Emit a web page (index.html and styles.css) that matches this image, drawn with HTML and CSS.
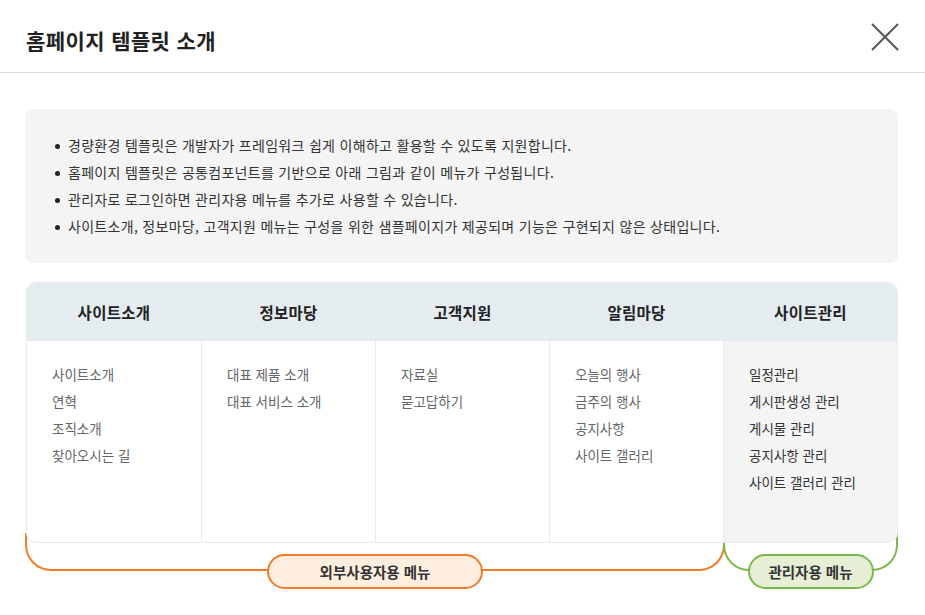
FILE: index.html
```html
<!DOCTYPE html>
<html lang="ko">
<head>
    <meta charset="UTF-8">
    <meta name="viewport" content="width=device-width, initial-scale=1.0">
    <title>홈페이지 템플릿 소개</title>
    <link rel="stylesheet" href="styles.css">
</head>
<body>

    <!-- 팝업 헤더 -->
    <div class="popup-head">
        <h1>홈페이지 템플릿 소개</h1>
        <button type="button" class="btn-close" aria-label="닫기">
            <svg width="30" height="30" viewBox="0 0 30 30">
                <path d="M2 2 L28 28 M28 2 L2 28" stroke="#555" stroke-width="2" fill="none"/>
            </svg>
        </button>
    </div>

    <div class="popup-body">
        <!-- 안내 문구 -->
        <ul class="info-box">
            <li>경량환경 템플릿은 개발자가 프레임워크 쉽게 이해하고 활용할 수 있도록 지원합니다.</li>
            <li>홈페이지 템플릿은 공통컴포넌트를 기반으로 아래 그림과 같이 메뉴가 구성됩니다.</li>
            <li>관리자로 로그인하면 관리자용 메뉴를 추가로 사용할 수 있습니다.</li>
            <li>사이트소개, 정보마당, 고객지원 메뉴는 구성을 위한 샘플페이지가 제공되며 기능은 구현되지 않은 상태입니다.</li>
        </ul>

        <!-- 메뉴 구성도 -->
        <div class="menu-map">
            <div class="menu-col">
                <div class="menu-title">사이트소개</div>
                <ul class="menu-list">
                    <li>사이트소개</li>
                    <li>연혁</li>
                    <li>조직소개</li>
                    <li>찾아오시는 길</li>
                </ul>
            </div>
            <div class="menu-col">
                <div class="menu-title">정보마당</div>
                <ul class="menu-list">
                    <li>대표 제품 소개</li>
                    <li>대표 서비스 소개</li>
                </ul>
            </div>
            <div class="menu-col">
                <div class="menu-title">고객지원</div>
                <ul class="menu-list">
                    <li>자료실</li>
                    <li>묻고답하기</li>
                </ul>
            </div>
            <div class="menu-col">
                <div class="menu-title">알림마당</div>
                <ul class="menu-list">
                    <li>오늘의 행사</li>
                    <li>금주의 행사</li>
                    <li>공지사항</li>
                    <li>사이트 갤러리</li>
                </ul>
            </div>
            <div class="menu-col admin">
                <div class="menu-title">사이트관리</div>
                <ul class="menu-list">
                    <li>일정관리</li>
                    <li>게시판생성 관리</li>
                    <li>게시물 관리</li>
                    <li>공지사항 관리</li>
                    <li>사이트 갤러리 관리</li>
                </ul>
            </div>
        </div>

        <!-- 사용자 구분 괄호 -->
        <div class="bracket-row">
            <div class="bracket user">
                <span class="bracket-label">외부사용자용 메뉴</span>
            </div>
            <div class="bracket manager">
                <span class="bracket-label">관리자용 메뉴</span>
            </div>
        </div>
    </div>

</body>
</html>
```

FILE: styles.css
```css
body {
    margin: 0;
    font-family: "Noto Sans CJK KR", "Noto Sans", sans-serif;
    color: #333;
    background-color: #fff;
}
ul {
    margin: 0;
    padding: 0;
}

/* header */
.popup-head {
    display: flex;
    align-items: center;
    justify-content: space-between;
    box-sizing: border-box;
    height: 73px;
    padding: 8px 25px 0 26px;
    border-bottom: 1px solid #dcdcdc;
}
.popup-head h1 {
    margin: 0;
    font-size: 21px;
    font-weight: 700;
    color: #222;
    letter-spacing: 0.4px;
}
.btn-close {
    display: flex;
    margin-top: -6px;
    padding: 0;
    border: none;
    background: none;
    cursor: pointer;
}

.popup-body {
    padding: 36px 27px 40px 25px;
}

/* info box */
.info-box {
    list-style: none;
    background-color: #f4f4f4;
    border-radius: 8px;
    padding: 23px 20px 23px 30px;
}
.info-box li {
    position: relative;
    padding-left: 13px;
    font-size: 14px;
    line-height: 27px;
    color: #333;
    letter-spacing: 0.3px;
}
.info-box li::before {
    content: "";
    position: absolute;
    left: 0;
    top: 12px;
    width: 5px;
    height: 5px;
    border-radius: 50%;
    background-color: #222;
}

/* menu map */
.menu-map {
    position: relative;
    z-index: 1;
    display: grid;
    grid-template-columns: repeat(5, 1fr);
    margin: 19px 0 0 1px;
    border: 1px solid #e6eaed;
    border-radius: 10px;
    overflow: hidden;
    background-color: #fff;
}
.menu-col {
    display: flex;
    flex-direction: column;
    border-left: 1px solid #e6eaed;
}
.menu-col:first-child {
    border-left: none;
}
.menu-title {
    height: 58px;
    display: flex;
    align-items: center;
    justify-content: center;
    background-color: #e5ecf0;
    font-size: 15.5px;
    font-weight: 700;
    color: #222;
    letter-spacing: 0.3px;
}
.menu-list {
    list-style: none;
    box-sizing: border-box;
    height: 201px;
    padding: 20px 25px 0;
}
.menu-list li {
    font-size: 13.5px;
    line-height: 27px;
    color: #666;
}
.admin .menu-list {
    background-color: #f4f4f4;
}
.admin .menu-list li {
    color: #333;
}

/* brackets under the menu map */
.bracket-row {
    position: relative;
    display: flex;
    margin-top: -10px;
    padding-bottom: 20px;
}
.bracket {
    position: relative;
    height: 36px;
    border: 2px solid;
    border-top: none;
    border-radius: 0 0 26px 26px;
}
.bracket.user {
    width: 696px;
    border-color: #f37b28;
}
.bracket.manager {
    flex: 1;
    margin-left: -2px;
    border-color: #7bb84e;
}
.bracket-label {
    position: absolute;
    left: 50%;
    bottom: -20px;
    z-index: 2;
    transform: translateX(-50%);
    box-sizing: border-box;
    height: 35px;
    display: flex;
    align-items: center;
    justify-content: center;
    border: 2px solid;
    border-radius: 18px;
    font-size: 14.5px;
    font-weight: 700;
    color: #333;
    white-space: nowrap;
}
.user .bracket-label {
    width: 216px;
    background-color: #fdeee0;
    border-color: #f37b28;
}
.manager .bracket-label {
    width: 126px;
    background-color: #e6efd5;
    border-color: #7bb84e;
}
```
